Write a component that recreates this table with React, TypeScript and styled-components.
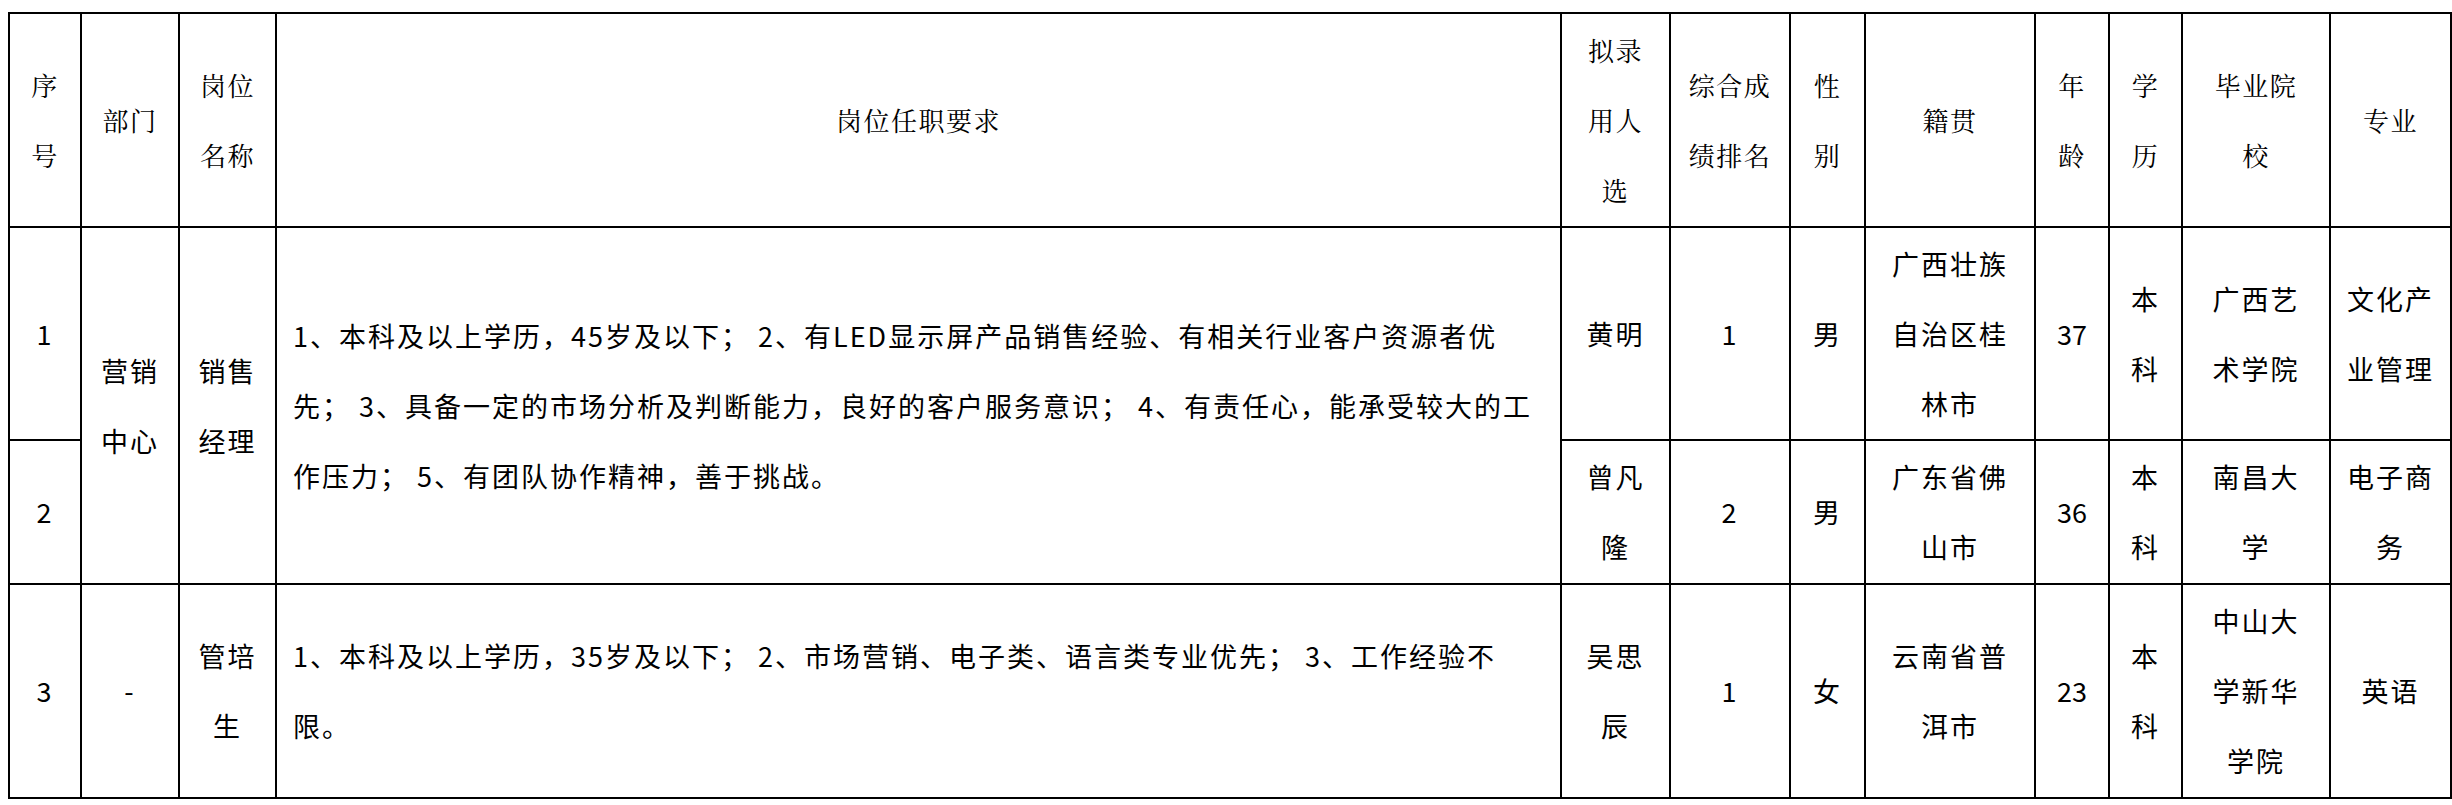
import React from "react"
import styled, { createGlobalStyle } from "styled-components"

const GlobalStyle = createGlobalStyle`
    body {
        margin: 0;
        background: #fff;
    }
`

const Page = styled.div`
    padding: 12px 0 0 8px;
`

const Table = styled.table`
    border-collapse: collapse;
    table-layout: fixed;
    width: 2442px;
    color: #000;
`

const Col = styled.col<{ $w: number }>`
    width: ${(p) => p.$w}px;
`

const Row = styled.tr<{ $h: number }>`
    height: ${(p) => p.$h}px;
`

const HeadCell = styled.th<{ $pad: number }>`
    border: 2px solid #000;
    padding: 0 ${(p) => p.$pad}px;
    font-family: "Noto Serif CJK SC", "Noto Sans CJK SC", serif;
    font-weight: 400;
    font-size: 26px;
    letter-spacing: 1.5px;
    line-height: 70px;
    text-align: center;
    vertical-align: middle;
`

const Cell = styled.td<{ $pad: number }>`
    border: 2px solid #000;
    padding: 0 ${(p) => p.$pad}px;
    font-family: "Noto Sans CJK SC", sans-serif;
    font-size: 27px;
    letter-spacing: 2px;
    line-height: 70px;
    text-align: center;
    vertical-align: middle;
`

const ReqCell = styled(Cell)`
    text-align: left;
    padding-left: 16px;
`

const Line = styled.span`
    display: block;
    white-space: nowrap;
`

const Num = styled.span`
    letter-spacing: 0;
`

const widths = [72, 98, 97, 1285, 109, 120, 75, 170, 74, 73, 148, 121]
const pads = [10, 10, 10, 0, 16, 10, 12, 14, 12, 12, 24, 10]

const headers = [
    "序号",
    "部门",
    "岗位名称",
    "岗位任职要求",
    "拟录用人选",
    "综合成绩排名",
    "性别",
    "籍贯",
    "年龄",
    "学历",
    "毕业院校",
    "专业",
]

type Person = {
    name: string
    rank: string
    gender: string
    origin: string
    age: string
    degree: string
    school: string
    major: string
}

function PersonCells({ p }: { p: Person }) {
    return (
        <>
            <Cell $pad={pads[4]}>{p.name}</Cell>
            <Cell $pad={pads[5]}>{p.rank}</Cell>
            <Cell $pad={pads[6]}>{p.gender}</Cell>
            <Cell $pad={pads[7]}>{p.origin}</Cell>
            <Cell $pad={pads[8]}>
                <Num>{p.age}</Num>
            </Cell>
            <Cell $pad={pads[9]}>{p.degree}</Cell>
            <Cell $pad={pads[10]}>{p.school}</Cell>
            <Cell $pad={pads[11]}>{p.major}</Cell>
        </>
    )
}

const people: Person[] = [
    {
        name: "黄明",
        rank: "1",
        gender: "男",
        origin: "广西壮族自治区桂林市",
        age: "37",
        degree: "本科",
        school: "广西艺术学院",
        major: "文化产业管理",
    },
    {
        name: "曾凡隆",
        rank: "2",
        gender: "男",
        origin: "广东省佛山市",
        age: "36",
        degree: "本科",
        school: "南昌大学",
        major: "电子商务",
    },
    {
        name: "吴思辰",
        rank: "1",
        gender: "女",
        origin: "云南省普洱市",
        age: "23",
        degree: "本科",
        school: "中山大学新华学院",
        major: "英语",
    },
]

const salesReq = [
    "1、本科及以上学历，45岁及以下； 2、有LED显示屏产品销售经验、有相关行业客户资源者优",
    "先； 3、具备一定的市场分析及判断能力，良好的客户服务意识； 4、有责任心，能承受较大的工",
    "作压力； 5、有团队协作精神，善于挑战。",
]

const traineeReq = [
    "1、本科及以上学历，35岁及以下； 2、市场营销、电子类、语言类专业优先； 3、工作经验不",
    "限。",
]

function App() {
    return (
        <Page>
            <GlobalStyle />
            <Table>
                <colgroup>
                    {widths.map((w, i) => (
                        <Col key={i} $w={w} />
                    ))}
                </colgroup>
                <thead>
                    <Row $h={214}>
                        {headers.map((h, i) => (
                            <HeadCell key={h} $pad={pads[i]}>
                                {h}
                            </HeadCell>
                        ))}
                    </Row>
                </thead>
                <tbody>
                    <Row $h={213}>
                        <Cell $pad={pads[0]}>1</Cell>
                        <Cell $pad={pads[1]} rowSpan={2}>
                            营销中心
                        </Cell>
                        <Cell $pad={pads[2]} rowSpan={2}>
                            销售经理
                        </Cell>
                        <ReqCell $pad={0} rowSpan={2}>
                            {salesReq.map((l) => (
                                <Line key={l}>{l}</Line>
                            ))}
                        </ReqCell>
                        <PersonCells p={people[0]} />
                    </Row>
                    <Row $h={144}>
                        <Cell $pad={pads[0]}>2</Cell>
                        <PersonCells p={people[1]} />
                    </Row>
                    <Row $h={214}>
                        <Cell $pad={pads[0]}>3</Cell>
                        <Cell $pad={pads[1]}>-</Cell>
                        <Cell $pad={pads[2]}>管培生</Cell>
                        <ReqCell $pad={0}>
                            {traineeReq.map((l) => (
                                <Line key={l}>{l}</Line>
                            ))}
                        </ReqCell>
                        <PersonCells p={people[2]} />
                    </Row>
                </tbody>
            </Table>
        </Page>
    )
}

export default App
